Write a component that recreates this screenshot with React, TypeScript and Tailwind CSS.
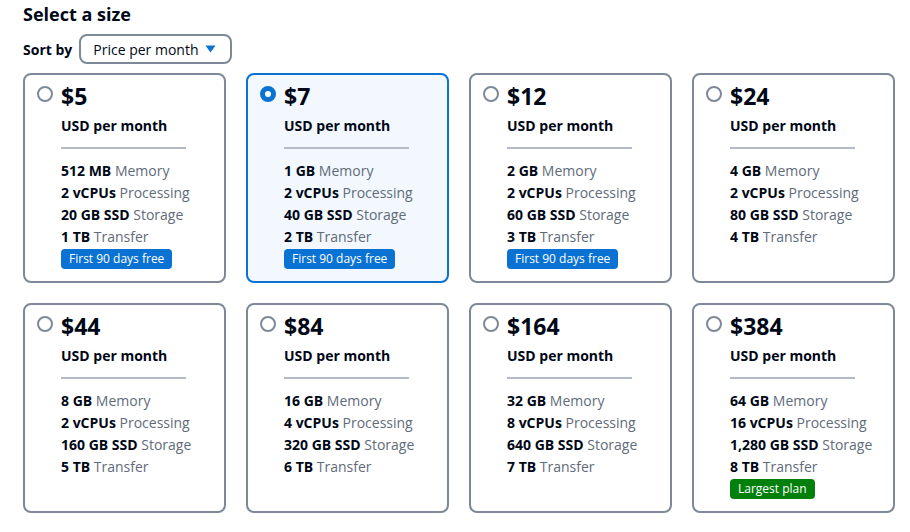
type Plan = {
  price: string;
  memory: string;
  cpus: string;
  storage: string;
  transfer: string;
  badge?: "free" | "largest";
};

const plans: Plan[] = [
  { price: "$5", memory: "512 MB", cpus: "2 vCPUs", storage: "20 GB SSD", transfer: "1 TB", badge: "free" },
  { price: "$7", memory: "1 GB", cpus: "2 vCPUs", storage: "40 GB SSD", transfer: "2 TB", badge: "free" },
  { price: "$12", memory: "2 GB", cpus: "2 vCPUs", storage: "60 GB SSD", transfer: "3 TB", badge: "free" },
  { price: "$24", memory: "4 GB", cpus: "2 vCPUs", storage: "80 GB SSD", transfer: "4 TB" },
  { price: "$44", memory: "8 GB", cpus: "2 vCPUs", storage: "160 GB SSD", transfer: "5 TB" },
  { price: "$84", memory: "16 GB", cpus: "4 vCPUs", storage: "320 GB SSD", transfer: "6 TB" },
  { price: "$164", memory: "32 GB", cpus: "8 vCPUs", storage: "640 GB SSD", transfer: "7 TB" },
  { price: "$384", memory: "64 GB", cpus: "16 vCPUs", storage: "1,280 GB SSD", transfer: "8 TB", badge: "largest" },
];

function Spec({ value, label }: { value: string; label: string }) {
  return (
    <div className="h-[22px] leading-[22px] text-[14px] whitespace-nowrap">
      <span className="font-bold text-[#000716]">{value}</span>{" "}
      <span className="text-[#5f6b7a]">{label}</span>
    </div>
  );
}

function PlanCard({ plan, selected }: { plan: Plan; selected: boolean }) {
  return (
    <div
      className={
        selected
          ? "h-[210px] rounded-[8px] border-2 border-[#0972d3] bg-[#f2f8fd] pl-[12px] pt-[7px] flex gap-[8px]"
          : "h-[210px] rounded-[8px] border-2 border-[#7d8998] bg-white pl-[12px] pt-[7px] flex gap-[8px]"
      }
    >
      <div className="pt-[4px]">
        {selected ? (
          <div className="w-[16px] h-[16px] rounded-full border-[5px] border-[#0972d3] bg-white" />
        ) : (
          <div className="w-[16px] h-[16px] rounded-full border-2 border-[#7d8998] bg-white" />
        )}
      </div>
      <div className="flex flex-col">
        <div className="text-[23px] leading-[28px] font-bold text-[#000716]">{plan.price}</div>
        <div className="mt-[6px] text-[14px] leading-[20px] font-bold text-[#000716]">USD per month</div>
        <div className="mt-[11px] w-[125px] h-[2px] bg-[#b4bbc4]" />
        <div className="mt-[11px]">
          <Spec value={plan.memory} label="Memory" />
          <Spec value={plan.cpus} label="Processing" />
          <Spec value={plan.storage} label="Storage" />
          <Spec value={plan.transfer} label="Transfer" />
        </div>
        {plan.badge === "free" && (
          <div className="mt-[1px] self-start h-[20px] rounded-[4px] bg-[#0972d3] px-[8px] text-[12px] leading-[20px] text-white">
            First 90 days free
          </div>
        )}
        {plan.badge === "largest" && (
          <div className="mt-[1px] self-start h-[20px] rounded-[4px] bg-[#037f0c] px-[8px] text-[12px] leading-[20px] text-white">
            Largest plan
          </div>
        )}
      </div>
    </div>
  );
}

export default function App() {
  return (
    <div className="min-h-screen bg-white px-[23px] pt-[2px] font-['Open_Sans',sans-serif] text-[#000716]">
      <h2 className="text-[18px] leading-[24px] font-bold">Select a size</h2>
      <div className="mt-[8px] flex items-center gap-[7px]">
        <span className="text-[14px] font-bold">Sort by</span>
        <div className="h-[30px] w-[153px] rounded-[8px] border-2 border-[#7d8998] pl-[12px] pr-[14px] flex items-center justify-between">
          <span className="text-[14px]">Price per month</span>
          <svg width="11" height="8" viewBox="0 0 11 8">
            <path d="M0.5 0.5 H10.5 L5.5 7.5 Z" fill="#0972d3" />
          </svg>
        </div>
      </div>
      <div className="mt-[9px] grid grid-cols-[repeat(4,203px)] gap-[20px]">
        {plans.map((p, i) => (
          <PlanCard key={p.price} plan={p} selected={i === 1} />
        ))}
      </div>
    </div>
  );
}
